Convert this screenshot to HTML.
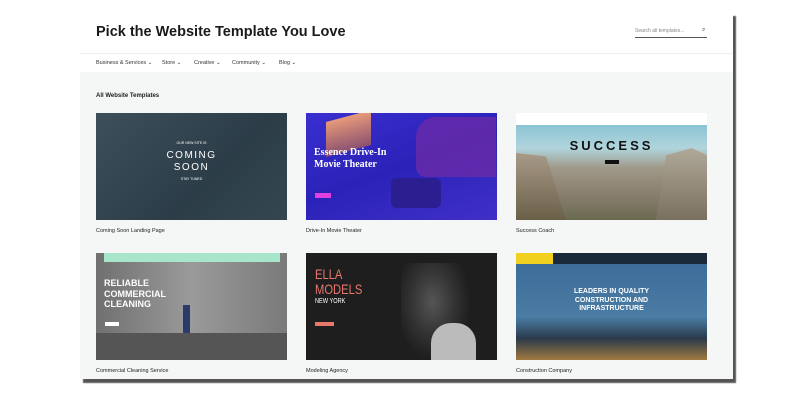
<!DOCTYPE html>
<html><head><meta charset="utf-8"><style>
*{margin:0;padding:0;box-sizing:border-box}
body{width:800px;height:400px;background:#fff;position:relative;overflow:hidden;font-family:"Liberation Sans",sans-serif;color:#222}
.a{position:absolute}
.page{left:80px;top:12px;width:653px;height:367px;background:#f5f6f6;box-shadow:3px 4px 1px #555}
.hdr{left:80px;top:12px;width:653px;height:60px;background:#fff}
.t{font-size:14.5px;font-weight:bold;color:#1a1a1a;left:96px;top:24px}
.nav{font-size:5.5px;color:#333;top:60px}
.img{overflow:hidden}
.lbl{font-size:5.5px;color:#222}
.w{color:#fff;font-weight:bold;text-align:center}
</style></head><body>
<div class="a page"></div>
<div class="a hdr"></div>
<div class="a" style="left:80px;top:53px;width:653px;height:1px;background:#eee"></div>
<div class="a t">Pick the Website Template You Love</div>
<div class="a" style="left:635px;top:28px;font-size:5px;color:#888">Search all templates...</div>
<div class="a" style="left:702px;top:27px;font-size:6px;color:#333">⌕</div>
<div class="a" style="left:635px;top:37px;width:72px;height:1px;background:#555"></div>
<div class="a nav" style="left:96px">Business &amp; Services ⌄</div>
<div class="a nav" style="left:162px">Store ⌄</div>
<div class="a nav" style="left:194px">Creative ⌄</div>
<div class="a nav" style="left:232px">Community ⌄</div>
<div class="a nav" style="left:279px">Blog ⌄</div>
<div class="a" style="left:96px;top:93px;font-size:6px;font-weight:bold">All Website Templates</div>

<div class="a img" style="left:96px;top:113px;width:191px;height:107px;background:linear-gradient(135deg,#3c4f5a,#2c3d48 60%,#34474f)">
 <div class="a w" style="left:0;top:28px;width:191px;font-size:3.5px;font-weight:normal">OUR NEW SITE IS</div>
 <div class="a w" style="left:0;top:37px;width:191px;font-size:10px;font-weight:normal;letter-spacing:1.5px;line-height:12px">COMING<br>SOON</div>
 <div class="a w" style="left:0;top:64px;width:191px;font-size:3.5px;font-weight:normal">STAY TUNED</div>
</div>
<div class="a img" style="left:306px;top:113px;width:191px;height:107px;background:linear-gradient(160deg,#3a2fd0,#2a22b8 50%,#4030c8)">
 <div class="a" style="left:110px;top:4px;width:80px;height:60px;background:#6a2aa8;border-radius:20px 0 0 10px;opacity:.8"></div>
 <div class="a" style="left:20px;top:3px;width:45px;height:35px;background:linear-gradient(#e89a7a,#8a5070);transform:skewY(-15deg)"></div>
 <div class="a" style="left:8px;top:34px;color:#fff;font-family:'Liberation Serif',serif;font-weight:bold;font-size:10px;line-height:12px">Essence Drive-In<br>Movie Theater</div>
 <div class="a" style="left:9px;top:80px;width:16px;height:5px;background:#e040e0"></div>
 <div class="a" style="left:85px;top:65px;width:50px;height:30px;background:#2a1e90;border-radius:6px"></div>
</div>
<div class="a img" style="left:516px;top:113px;width:191px;height:107px;background:linear-gradient(#fff 0,#fff 12px,#8cc4d4 12px,#b0d4dc 35px,#a09888 55px,#8a8070 80px,#6a6a50)">
 <div class="a" style="left:0;top:40px;width:50px;height:67px;background:linear-gradient(#a89a88,#6a6048);clip-path:polygon(0 0,60% 5%,100% 100%,0 100%)"></div>
 <div class="a" style="left:140px;top:35px;width:51px;height:72px;background:linear-gradient(#b0a898,#7a7060);clip-path:polygon(20% 10%,70% 0,100% 10%,100% 100%,0 100%)"></div>
 <div class="a" style="left:0;top:25px;width:191px;text-align:center;font-size:13px;font-weight:bold;letter-spacing:3px;color:#111">SUCCESS</div>
 <div class="a" style="left:89px;top:47px;width:14px;height:4px;background:#111"></div>
</div>
<div class="a lbl" style="left:96px;top:228px">Coming Soon Landing Page</div>
<div class="a lbl" style="left:306px;top:228px">Drive-In Movie Theater</div>
<div class="a lbl" style="left:516px;top:228px">Success Coach</div>

<div class="a img" style="left:96px;top:253px;width:191px;height:107px;background:linear-gradient(90deg,#707070,#9a9a9a 50%,#7a7a7a);">
 <div class="a" style="left:8px;top:0;width:176px;height:9px;background:#a8e6cc"></div>
 <div class="a" style="left:0;top:80px;width:191px;height:27px;background:#555"></div>
 <div class="a w" style="left:8px;top:25px;text-align:left;font-size:9px;line-height:10.5px">RELIABLE<br>COMMERCIAL<br>CLEANING</div>
 <div class="a" style="left:9px;top:69px;width:14px;height:4px;background:#fff"></div>
 <div class="a" style="left:87px;top:52px;width:7px;height:28px;background:#2a3a6a"></div>
</div>
<div class="a img" style="left:306px;top:253px;width:191px;height:107px;background:#1e1e1e">
 <div class="a" style="left:95px;top:10px;width:70px;height:97px;background:radial-gradient(ellipse at 45% 40%,#555 0,#333 40%,#1e1e1e 70%)"></div>
 <div class="a" style="left:125px;top:70px;width:45px;height:37px;background:#bbb;border-radius:20px 20px 0 0"></div>
 <div class="a" style="left:9px;top:14px;color:#e8776c;font-size:14px;line-height:15px;transform:scaleX(.8);transform-origin:left">ELLA<br>MODELS</div>
 <div class="a" style="left:9px;top:45px;color:#fff;font-size:7px;transform:scaleX(.8);transform-origin:left">NEW YORK</div>
 <div class="a" style="left:9px;top:69px;width:19px;height:4px;background:#e8776c"></div>
</div>
<div class="a img" style="left:516px;top:253px;width:191px;height:107px;background:linear-gradient(#3a6a98,#4a7ca4 60%,#2a3a4a 80%,#a07a40)">
 <div class="a" style="left:0;top:0;width:191px;height:11px;background:#1a2a3a"></div>
 <div class="a" style="left:0;top:0;width:37px;height:11px;background:#f2d020"></div>
 <div class="a w" style="left:0;top:35px;width:191px;font-size:7px;line-height:8.5px">LEADERS IN QUALITY<br>CONSTRUCTION AND<br>INFRASTRUCTURE</div>
</div>
<div class="a lbl" style="left:96px;top:368px">Commercial Cleaning Service</div>
<div class="a lbl" style="left:306px;top:368px">Modeling Agency</div>
<div class="a lbl" style="left:516px;top:368px">Construction Company</div>
</body></html>
